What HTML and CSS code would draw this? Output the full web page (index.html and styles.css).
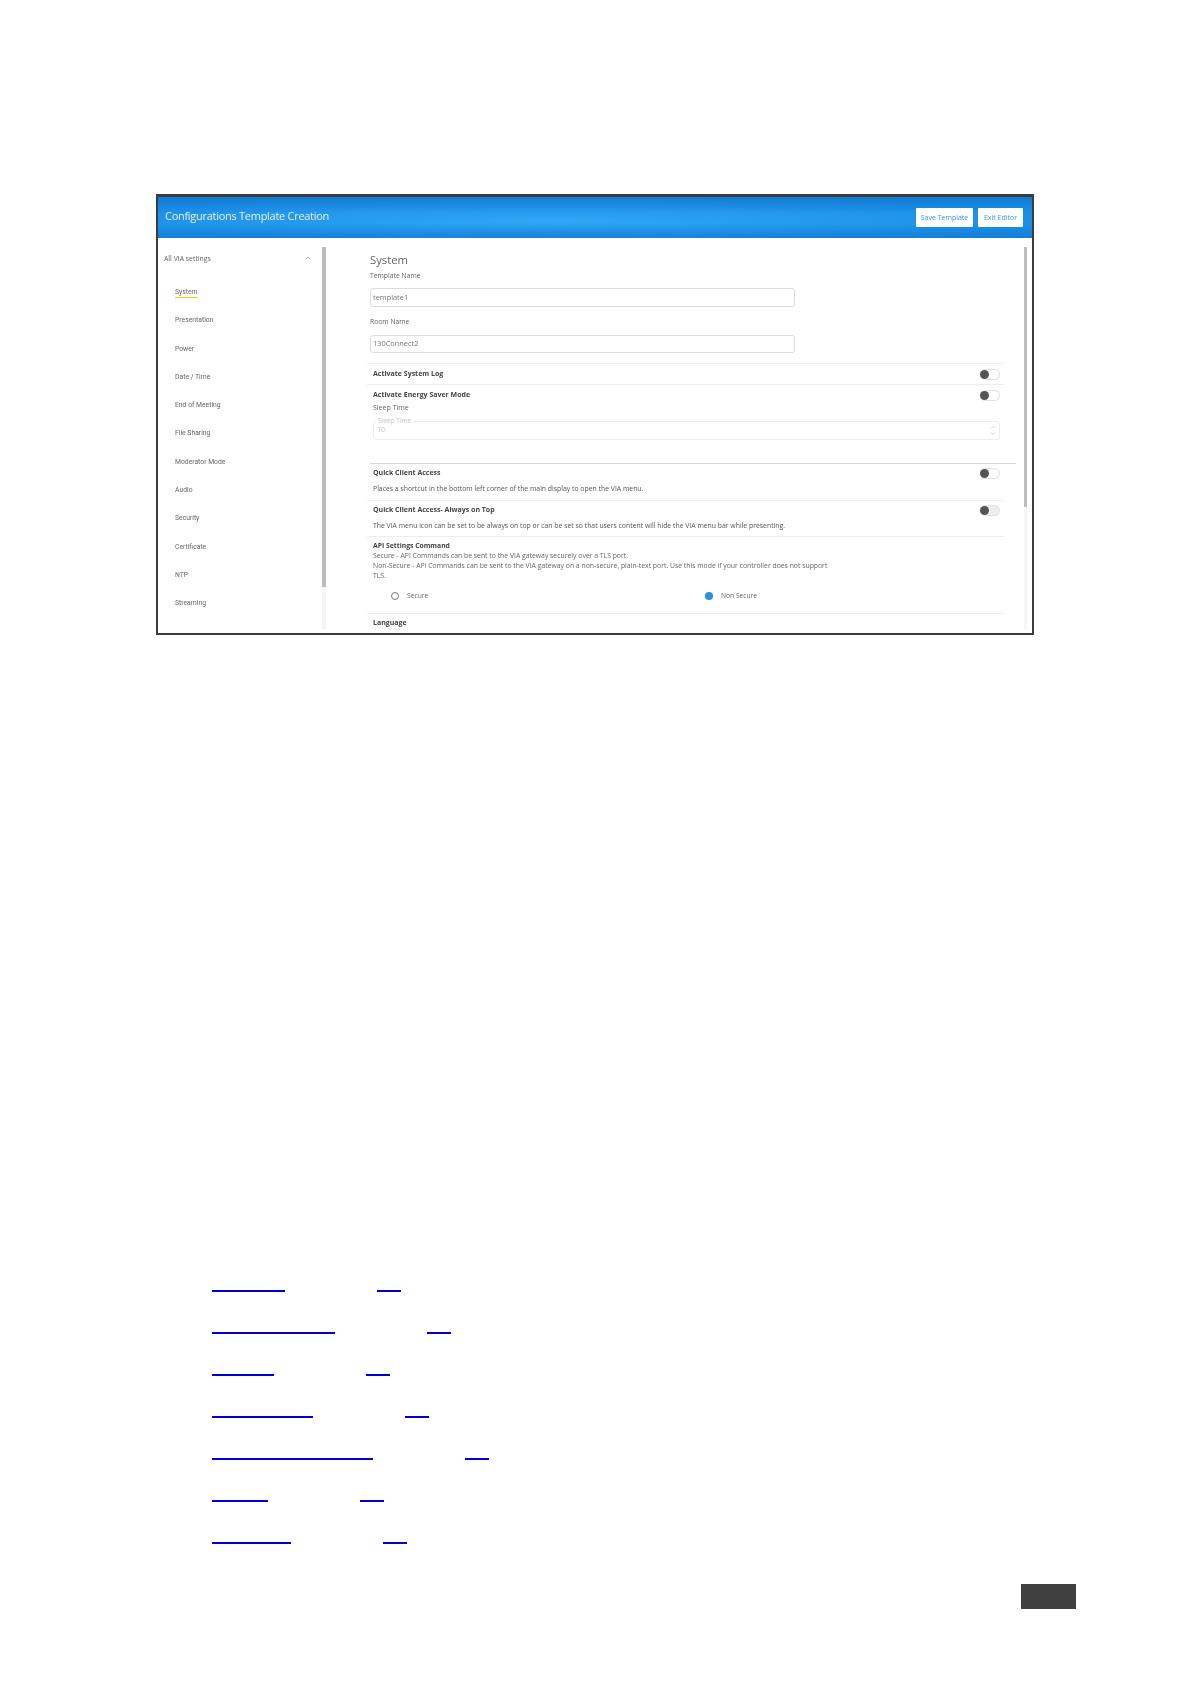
FILE: index.html
```html
<!DOCTYPE html>
<html lang="en">
<head>
    <meta charset="UTF-8">
    <title>Configurations Template Creation</title>
    <link rel="stylesheet" href="styles.css">
</head>
<body>
    <div class="frame">
        <header class="topbar">
            <span class="topbar-title">Configurations Template Creation</span>
            <div class="topbar-buttons">
                <button class="btn btn-save">Save Template</button>
                <button class="btn btn-exit">Exit Editor</button>
            </div>
        </header>
        <div class="panes">
            <aside class="sidebar">
                <div class="sidebar-list">
                    <div class="sidebar-head">
                        <span>All VIA settings</span>
                        <svg class="chevron" viewBox="0 0 8 5"><path d="M1 4l3-3 3 3" fill="none" stroke="#888" stroke-width="0.8"/></svg>
                    </div>
                    <a class="nav-item"><span class="nav-active">System</span></a>
                    <a class="nav-item">Presentation</a>
                    <a class="nav-item">Power</a>
                    <a class="nav-item">Date / Time</a>
                    <a class="nav-item">End of Meeting</a>
                    <a class="nav-item">File Sharing</a>
                    <a class="nav-item">Moderator Mode</a>
                    <a class="nav-item">Audio</a>
                    <a class="nav-item">Security</a>
                    <a class="nav-item">Certificate</a>
                    <a class="nav-item">NTP</a>
                    <a class="nav-item">Streaming</a>
                </div>
                <div class="scroll-track scroll-side"><div class="scroll-thumb thumb-side"></div></div>
            </aside>
            <main class="content">
                <div class="content-inner">
                    <h2 class="page-title">System</h2>
                    <label class="field-label label-template">Template Name</label>
                    <div class="text-input input-template">template1</div>
                    <label class="field-label label-room">Room Name</label>
                    <div class="text-input input-room">130Connect2</div>

                    <div class="row row-log">
                        <strong class="row-title">Activate System Log</strong>
                        <span class="toggle"></span>
                    </div>
                    <div class="row row-energy">
                        <div class="row-top">
                            <strong class="row-title">Activate Energy Saver Mode</strong>
                            <span class="toggle"></span>
                        </div>
                        <div class="sleep-label">Sleep Time</div>
                        <div class="sleep-field">
                            <span class="sleep-legend">Sleep Time</span>
                            <span class="sleep-value">10</span>
                            <svg class="spinner" viewBox="0 0 6 11"><path d="M1 3.5l2-2 2 2M1 7.5l2 2 2-2" fill="none" stroke="#c4c4c4" stroke-width="0.7"/></svg>
                        </div>
                    </div>
                    <div class="row row-wide row-quick">
                        <div class="row-top">
                            <strong class="row-title">Quick Client Access</strong>
                            <span class="toggle"></span>
                        </div>
                        <p class="row-text">Places a shortcut in the bottom left corner of the main display to open the VIA menu.</p>
                    </div>
                    <div class="row row-top-most">
                        <div class="row-top">
                            <strong class="row-title">Quick Client Access- Always on Top</strong>
                            <span class="toggle toggle-grey"></span>
                        </div>
                        <p class="row-text">The VIA menu icon can be set to be always on top or can be set so that users content will hide the VIA menu bar while presenting.</p>
                    </div>
                    <div class="row row-api">
                        <strong class="row-title api-title">API Settings Command</strong>
                        <p class="api-text">Secure - API Commands can be sent to the VIA gateway securely over a TLS port.<br>Non-Secure - API Commands can be sent to the VIA gateway on a non-secure, plain-text port. Use this mode if your controller does not support<br>TLS.</p>
                        <div class="radios">
                            <span class="radio-item radio-secure"><span class="radio"></span>Secure</span>
                            <span class="radio-item"><span class="radio radio-on"></span>Non Secure</span>
                        </div>
                    </div>
                    <div class="row row-lang">
                        <strong class="row-title">Language</strong>
                    </div>
                </div>
                <div class="scroll-track scroll-main"><div class="scroll-thumb thumb-main"></div></div>
            </main>
        </div>
    </div>

    <ul class="links">
        <li><a class="link-main w73"></a><a class="link-page"></a></li>
        <li><a class="link-main w123"></a><a class="link-page"></a></li>
        <li><a class="link-main w62"></a><a class="link-page"></a></li>
        <li><a class="link-main w101"></a><a class="link-page"></a></li>
        <li><a class="link-main w161"></a><a class="link-page"></a></li>
        <li><a class="link-main w56"></a><a class="link-page"></a></li>
        <li><a class="link-main w79"></a><a class="link-page"></a></li>
    </ul>

    <div class="page-foot"><div class="page-box"></div></div>
</body>
</html>
```
FILE: styles.css
```css
body {
    margin: 0;
    height: 1684px;
    overflow: hidden;
    background-color: white;
    font-family: "Open Sans", sans-serif;
    color: #555;
}

.frame {
    width: 874px;
    height: 436px;
    margin: 194px 0 0 156px;
    border: 2px solid #3c3c3c;
    border-top-width: 3px;
    display: flex;
    flex-direction: column;
    overflow: hidden;
    filter: blur(0.45px);
}

.topbar {
    height: 41px;
    flex: none;
    display: flex;
    align-items: center;
    justify-content: space-between;
    padding: 0 9px 0 7px;
    background:
        linear-gradient(180deg, rgba(10, 100, 190, 0.45) 0%, rgba(10, 100, 190, 0) 40%, rgba(10, 100, 190, 0) 65%, rgba(10, 100, 190, 0.4) 100%),
        radial-gradient(ellipse at 45% 60%, #2fa6f6 0%, #1a8ee6 75%);
}

.topbar-title {
    color: #e4f2fd;
    font-size: 11px;
    letter-spacing: -0.28px;
    margin-bottom: 5px;
}

.topbar-buttons {
    display: flex;
    gap: 5px;
}

.btn {
    height: 19px;
    padding: 0;
    border: none;
    border-radius: 1px;
    background-color: white;
    color: #3a94e6;
    font-family: "Open Sans", sans-serif;
    font-size: 7px;
}

.btn-save { width: 57px; }
.btn-exit { width: 45px; }

.panes {
    flex: 1;
    display: flex;
    min-height: 0;
}

.sidebar {
    width: 168px;
    flex: none;
    display: flex;
}

.sidebar-list {
    flex: 1;
    padding: 0 6px;
    font-family: Roboto, sans-serif;
    font-size: 6.8px;
    color: #666;
}

.sidebar-head {
    height: 40px;
    display: flex;
    align-items: center;
    justify-content: space-between;
    font-family: "Open Sans", sans-serif;
    font-size: 6.9px;
    padding-right: 5px;
}

.chevron {
    width: 6px;
    height: 4px;
}

.nav-item {
    display: block;
    height: 28.3px;
    line-height: 28.3px;
    padding-left: 11px;
}

.nav-active {
    display: inline-block;
    line-height: 9px;
    border-bottom: 1px solid #f0d000;
}

.scroll-track {
    flex: none;
    background-color: #f6f6f6;
}

.scroll-side {
    width: 4px;
    margin: 9px 0 4px;
}

.scroll-main {
    width: 3px;
    margin: 9px 5px 4px 0;
}

.scroll-thumb {
    background-color: #bcbcbc;
}

.thumb-side { height: 340px; }
.thumb-main { height: 260px; }

.content {
    flex: 1;
    display: flex;
    min-width: 0;
}

.content-inner {
    flex: 1;
    padding-left: 44px;
    overflow: hidden;
}

.page-title {
    margin: 14px 0 0;
    font-size: 11.3px;
    line-height: 16px;
    font-weight: 400;
    color: #666;
}

.field-label {
    display: block;
    font-size: 6.8px;
    line-height: 10px;
    color: #666;
}

.label-template { margin-top: 3px; }
.label-room { margin-top: 10px; }

.text-input {
    width: 425px;
    box-sizing: border-box;
    border: 1px solid #ddd;
    border-radius: 3px;
    padding-left: 2px;
    font-size: 7.4px;
    color: #777;
}

.input-template {
    height: 19px;
    line-height: 17px;
    margin-top: 7px;
}

.input-room {
    height: 18px;
    line-height: 15px;
    margin-top: 8px;
}

.row {
    width: 638px;
    margin-left: -3px;
    box-sizing: border-box;
    border-top: 1px solid #eeeeee;
    padding: 0 5px 0 6px;
}

.row-title {
    display: block;
    font-size: 7px;
    line-height: 10px;
    font-weight: 700;
    color: #444;
}

.row-top {
    display: flex;
    justify-content: space-between;
    align-items: flex-start;
}

.row-log {
    height: 21px;
    margin-top: 10px;
    display: flex;
    justify-content: space-between;
    align-items: flex-start;
    padding-top: 5px;
}

.row-energy {
    height: 79px;
    padding-top: 5px;
}

.row-wide {
    width: 646px;
    margin-left: 0;
    padding: 4px 16px 0 3px;
    border-top-color: #d8d8d8;
    height: 37px;
}

.row-top-most {
    height: 36px;
    padding-top: 4px;
}

.row-api {
    height: 77px;
    padding-top: 4px;
}

.row-lang {
    padding-top: 4px;
}

.toggle {
    width: 20px;
    height: 11px;
    flex: none;
    box-sizing: border-box;
    border: 1px solid #e2e2e2;
    border-left: none;
    border-radius: 6px;
    position: relative;
    display: block;
}

.toggle::before {
    content: "";
    position: absolute;
    left: 0;
    top: 0;
    width: 9px;
    height: 9px;
    border-radius: 50%;
    background-color: #555;
}

.toggle-grey { background-color: #eee; }

.sleep-label {
    font-size: 7px;
    line-height: 10px;
    margin-top: 2px;
    color: #666;
}

.sleep-field {
    height: 19px;
    box-sizing: border-box;
    margin-top: 8px;
    border: 1px solid #eeeeee;
    border-radius: 3px;
    position: relative;
    display: flex;
    align-items: center;
    justify-content: space-between;
    padding: 0 3px;
}

.sleep-legend {
    position: absolute;
    left: 2px;
    top: -6px;
    padding: 0 2px;
    background-color: white;
    font-size: 6.5px;
    line-height: 9px;
    color: #c6c6c6;
}

.sleep-value {
    font-size: 7px;
    margin-bottom: 2px;
    color: #c6c6c6;
}

.spinner {
    width: 6px;
    height: 11px;
}

.row-text {
    margin: 5px 0 0;
    font-size: 6.87px;
    line-height: 10px;
    color: #555;
}

.api-title {
    font-size: 6.8px;
}

.api-text {
    margin: 0;
    font-size: 6.85px;
    line-height: 10px;
    color: #666;
}

.radios {
    display: flex;
    margin-top: 10px;
    font-size: 6.7px;
    color: #666;
}

.radio-item {
    display: flex;
    align-items: center;
    gap: 8px;
}

.radio-secure {
    width: 314px;
    margin-left: 18px;
}

.radio {
    width: 8px;
    height: 8px;
    box-sizing: border-box;
    border: 1px solid #777;
    border-radius: 50%;
}

.radio-on {
    border: none;
    background-color: #2b8fe0;
}

.links {
    list-style: none;
    margin: 615px 0 0;
    padding: 0 0 0 212px;
}

.links li {
    height: 42px;
    display: flex;
    align-items: flex-end;
    gap: 92px;
}

.links a {
    display: block;
    height: 2px;
    background-color: #0000d4;
}

.link-page { width: 24px; }
.w73 { width: 73px; }
.w123 { width: 123px; }
.w62 { width: 62px; }
.w101 { width: 101px; }
.w161 { width: 161px; }
.w56 { width: 56px; }
.w79 { width: 79px; }

.page-foot {
    display: flex;
    justify-content: flex-end;
    margin-top: 40px;
    padding-right: 115px;
}

.page-box {
    width: 55px;
    height: 25px;
    background-color: #404040;
}
```
